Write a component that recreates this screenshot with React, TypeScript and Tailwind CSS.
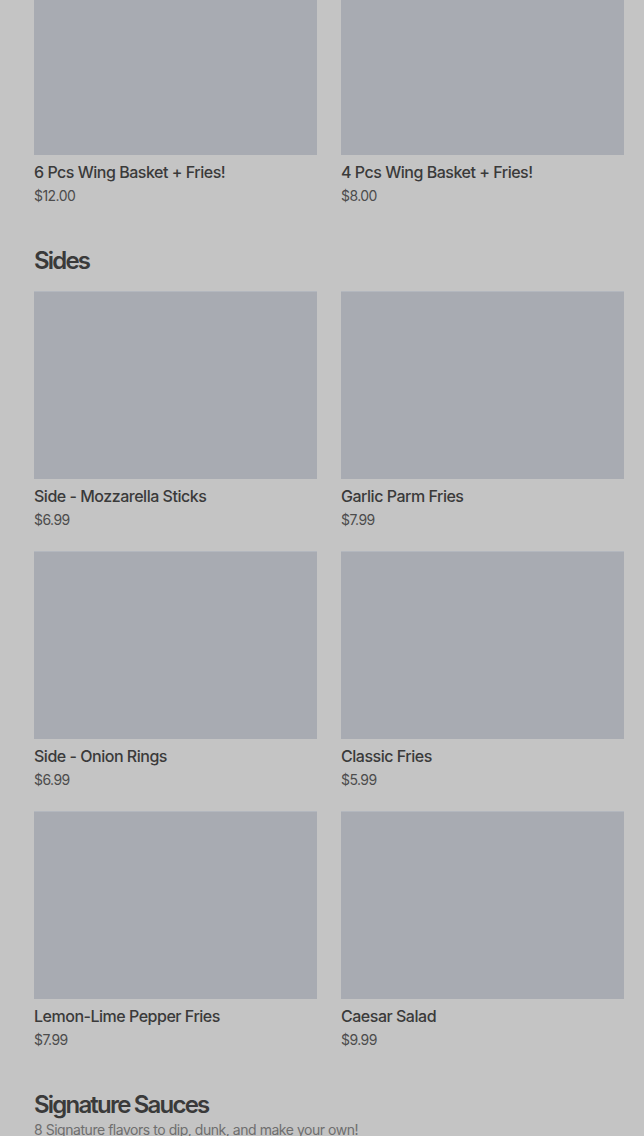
import React from "react";

type Item = { name: string; price: string };

const combos: Item[] = [
  { name: "6 Pcs Wing Basket + Fries!", price: "$12.00" },
  { name: "4 Pcs Wing Basket + Fries!", price: "$8.00" },
];

const sides: Item[] = [
  { name: "Side - Mozzarella Sticks", price: "$6.99" },
  { name: "Garlic Parm Fries", price: "$7.99" },
  { name: "Side - Onion Rings", price: "$6.99" },
  { name: "Classic Fries", price: "$5.99" },
  { name: "Lemon-Lime Pepper Fries", price: "$7.99" },
  { name: "Caesar Salad", price: "$9.99" },
];

function MenuCard({ item }: { item: Item }) {
  return (
    <div className="flex flex-col">
      <div className="h-[188px] w-full bg-[#a8abb2] border-t border-[#b3b7be]"></div>
      <p className="mt-[7px] text-[16px] leading-5 font-medium tracking-[-0.03em] text-[#3a3a3a]">{item.name}</p>
      <p className="mt-[4px] text-[14px] leading-5 tracking-[-0.04em] text-[#4c4c4c]">{item.price}</p>
    </div>
  );
}

function MenuGrid({ items }: { items: Item[] }) {
  return (
    <div className="grid grid-cols-2 gap-x-6 gap-y-[21px]">
      {items.map((item) => (
        <MenuCard key={item.name} item={item} />
      ))}
    </div>
  );
}

export default function App() {
  return (
    <div
      className="min-h-[1136px] overflow-hidden bg-[#c4c4c4]"
      style={{ fontFamily: "Inter, 'Liberation Sans', sans-serif" }}
    >
      {/* scrolled: first image is cut off at the top */}
      <div className="-mt-[33px] pl-[34px] pr-[20px]">
        <MenuGrid items={combos} />

        <section className="mt-[39px]">
          <h2 className="text-[24px] leading-8 font-semibold tracking-[-0.075em] text-[#3a3a3a]">Sides</h2>
          <div className="mt-[14px]">
            <MenuGrid items={sides} />
          </div>
        </section>

        <section className="mt-[39px]">
          <h2 className="text-[24px] leading-8 font-semibold tracking-[-0.075em] text-[#3a3a3a]">
            Signature Sauces
          </h2>
          <p className="-mt-[1px] text-[14px] leading-5 tracking-[-0.033em] text-[#6e6e6e]">
            8 Signature flavors to dip, dunk, and make your own!
          </p>
        </section>
      </div>
    </div>
  );
}
